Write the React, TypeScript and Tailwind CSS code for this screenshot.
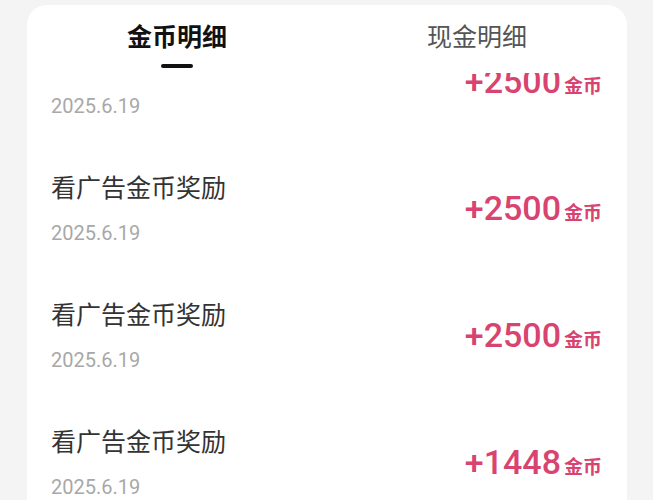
import React from 'react';

interface CoinRecord {
  title: string;
  date: string;
  amount: number;
}

const RECORDS: CoinRecord[] = [
  { title: '看广告金币奖励', date: '2025.6.19', amount: 2500 },
  { title: '看广告金币奖励', date: '2025.6.19', amount: 2500 },
  { title: '看广告金币奖励', date: '2025.6.19', amount: 2500 },
  { title: '看广告金币奖励', date: '2025.6.19', amount: 1448 },
];

const FONT = 'font-[Roboto,"Noto_Sans_CJK_SC",sans-serif]';

const RecordRow: React.FC<{ record: CoinRecord }> = ({ record }) => (
  <div className="h-[127px] flex items-center justify-between pl-[24px] pr-[25px]">
    <div className="flex flex-col gap-[12px]">
      <div className="text-[25px] leading-[36px] text-[#333333]">{record.title}</div>
      <div className="text-[20px] leading-[28px] text-[#a8a8a8]">{record.date}</div>
    </div>
    <div className="flex items-baseline gap-[3px] text-[#d8436f]">
      <span className="text-[34px] leading-[40px] font-medium">+{record.amount}</span>
      <span className="text-[19px] font-bold">金币</span>
    </div>
  </div>
);

export default function App() {
  return (
    <div className={`w-full h-[500px] overflow-hidden bg-[#f4f4f4] pl-[27px] pr-[26px] pt-[5px] ${FONT}`}>
      <div className="h-[560px] bg-white rounded-[20px] flex flex-col">
        <div className="h-[68px] grid grid-cols-2 shrink-0">
          <button className="flex flex-col items-center pt-[15px]">
            <span className="text-[25px] leading-[35px] font-bold text-[#111111]">金币明细</span>
            <span className="mt-[9px] w-[32px] h-[4px] rounded-full bg-[#111111]" />
          </button>
          <button className="flex flex-col items-center pt-[15px]">
            <span className="text-[25px] leading-[35px] text-[#555555]">现金明细</span>
          </button>
        </div>
        <div className="flex-1 overflow-hidden">
          <div className="-mt-[55px]">
            {RECORDS.map((r, i) => (
              <RecordRow key={i} record={r} />
            ))}
          </div>
        </div>
      </div>
    </div>
  );
}
